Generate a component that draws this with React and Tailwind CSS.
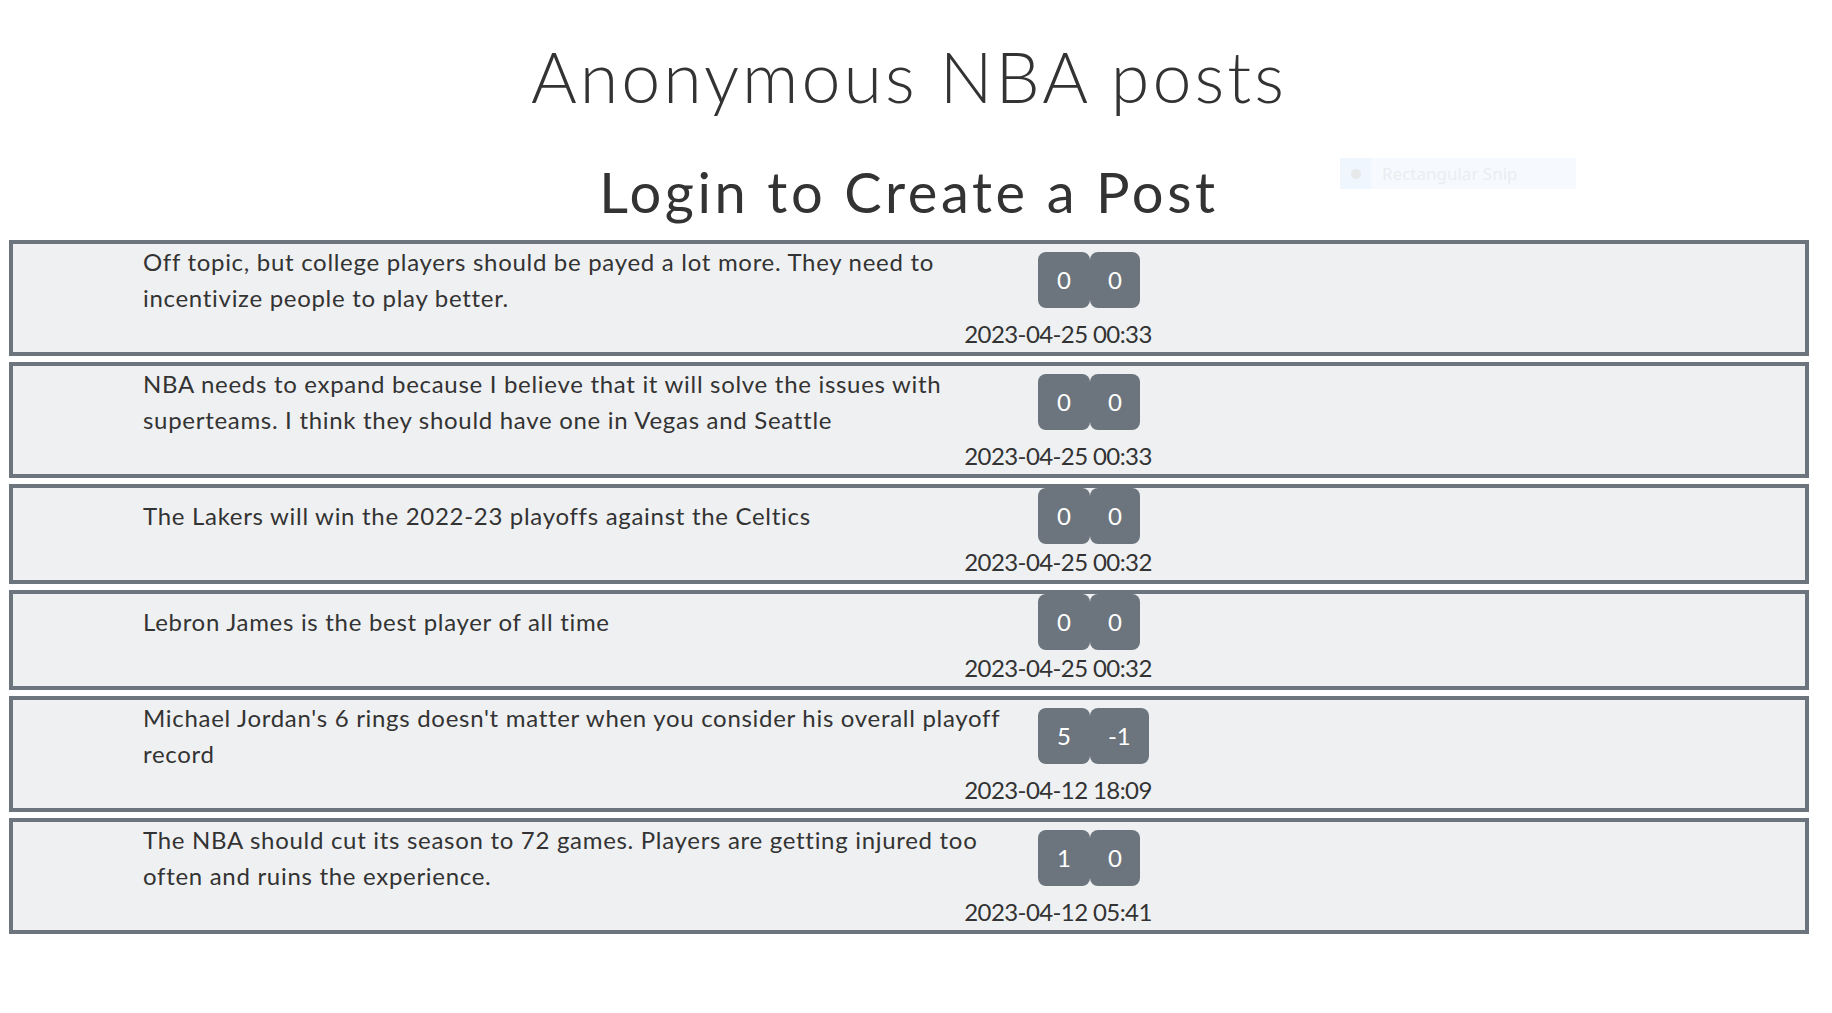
const posts = [
  {
    lines: ["Off topic, but college players should be payed a lot more. They need to", "incentivize people to play better."],
    up: 0,
    down: 0,
    date: "2023-04-25 00:33",
  },
  {
    lines: ["NBA needs to expand because I believe that it will solve the issues with", "superteams. I think they should have one in Vegas and Seattle"],
    up: 0,
    down: 0,
    date: "2023-04-25 00:33",
  },
  {
    lines: ["The Lakers will win the 2022-23 playoffs against the Celtics"],
    up: 0,
    down: 0,
    date: "2023-04-25 00:32",
  },
  {
    lines: ["Lebron James is the best player of all time"],
    up: 0,
    down: 0,
    date: "2023-04-25 00:32",
  },
  {
    lines: ["Michael Jordan's 6 rings doesn't matter when you consider his overall playoff", "record"],
    up: 5,
    down: -1,
    date: "2023-04-12 18:09",
  },
  {
    lines: ["The NBA should cut its season to 72 games. Players are getting injured too", "often and ruins the experience."],
    up: 1,
    down: 0,
    date: "2023-04-12 05:41",
  },
];

function Post({ post }) {
  return (
    <div className="mx-[9px] mb-[6px] border-4 border-[#6c757d] bg-[#eff0f2]">
      <div className="flex items-center">
        <p className="w-[1025px] pl-[130px] text-[24px] leading-[36px] tracking-[0.7px]">
          {post.lines.map((line, i) => (
            <span key={i}>
              {line}
              {i < post.lines.length - 1 && <br />}
            </span>
          ))}
        </p>
        <div className="flex">
          <button className="h-[56px] rounded-lg bg-[#6c757d] px-[19px] text-[24px] leading-[36px] text-white">
            {post.up}
          </button>
          <button className="h-[56px] rounded-lg bg-[#6c757d] px-[18px] text-[24px] leading-[36px] text-white">
            {post.down}
          </button>
        </div>
      </div>
      <div className="ml-[925px] w-[240px] text-center text-[24px] leading-[36px] tracking-[-0.6px]">{post.date}</div>
    </div>
  );
}

export default function App() {
  return (
    <div className="relative min-h-screen w-[1818px] bg-white pb-10 text-[#333] font-['Lato',sans-serif]">
      {/* header */}
      <h1 className="pt-[34px] text-center text-[70px] font-light leading-[1.2] tracking-[3px]">Anonymous NBA posts</h1>
      <h2 className="mt-[40px] text-center text-[56px] font-normal leading-[1.2] tracking-[3.6px]">Login to Create a Post</h2>

      <div className="mt-[15px]">
        {posts.map((post, i) => (
          <Post key={i} post={post} />
        ))}
      </div>

      {/* faint snipping tool overlay */}
      <div className="absolute left-[1340px] top-[158px] flex h-[31px] w-[236px] items-center bg-[#f6faff] font-['Noto_Sans',sans-serif]">
        <div className="flex h-full w-[31px] items-center justify-center bg-[#eff6fe]">
          <span className="block h-[10px] w-[10px] rounded-full bg-[#e6e8ea]" />
        </div>
        <span className="ml-[11px] text-[17px] text-[#ebedef]">Rectangular Snip</span>
      </div>
    </div>
  );
}
